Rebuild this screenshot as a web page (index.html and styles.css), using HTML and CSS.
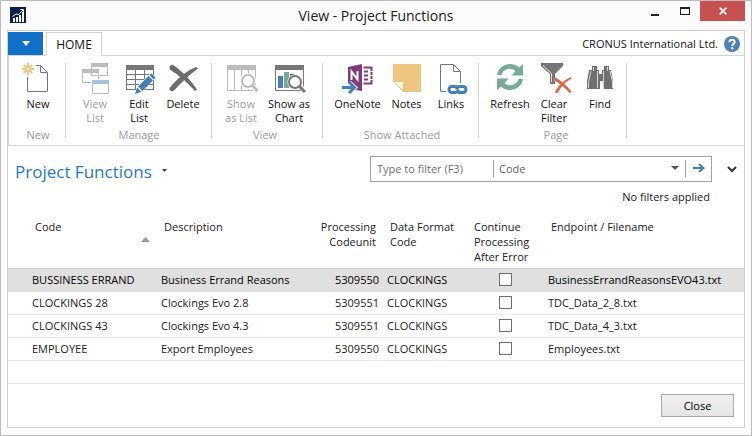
FILE: index.html
```
<!DOCTYPE html>
<html lang="en">
<head>
<meta charset="utf-8">
<title>View - Project Functions</title>
<link rel="stylesheet" href="styles.css">
</head>
<body>
<div class="window">
  <header class="titlebar">
    <svg class="logo" viewBox="0 0 16 16" width="16" height="16"><rect width="16" height="16" fill="#06204f"/><path d="M3 11h2v4H3zM6 10h2v5H6zM9 8h2v7H9zM12 5h2v10h-2z" fill="#fff"/><path d="M2.500 9.500 6 7l2.500.5L13 3M10.500 2.500h3v3" fill="none" stroke="#fff"/></svg>
    <h1 class="title">View - Project Functions</h1>
    <div class="controls">
      <button class="control" aria-label="Minimize"><svg viewBox="0 0 10 10" width="10" height="10"><path d="M1 8h8v2H1z" fill="#222"/></svg></button>
      <button class="control" aria-label="Maximize"><svg viewBox="0 0 10 10" width="10" height="10"><path d="M0 1h10v8H0zM1 3v5h8V3z" fill="#222" fill-rule="evenodd"/></svg></button>
      <button class="control control-close" aria-label="Close window"><svg viewBox="0 0 8 8" width="8" height="8"><path d="m.7.7 6.600 6.600m0-6.600L.7 7.300" stroke="#fff" stroke-width="1.800"/></svg></button>
    </div>
  </header>

  <main class="panel">
    <nav class="tabs">
      <button class="app-menu" aria-label="Application menu"><svg viewBox="0 0 8 5" width="8" height="5"><path d="M0 0h8L4 5z" fill="#fff"/></svg></button>
      <button class="tab">HOME</button>
      <span class="company">CRONUS International Ltd.</span>
      <button class="help" aria-label="Help"><svg viewBox="0 0 16 16" width="16" height="16"><circle cx="8" cy="8" r="8" fill="#4a7fb8"/><path d="M5.400 6.200C5.400 2.800 10.800 3 10.700 6c0 1.900-2.500 1.900-2.500 4" fill="none" stroke="#fff" stroke-width="2"/><circle cx="8.200" cy="12.300" r="1.200" fill="#fff"/></svg></button>
    </nav>

    <section class="ribbon">
      <div class="group group-new">
        <div class="actions">
          <button class="action"><svg class="icon" viewBox="0 0 32 32"><path d="M5.500 14v14.500h20V9.500l-7-7H14m4.500 0v7h7" fill="none" stroke="#777"/><path d="M6 0v4m0 4v4M0 6h4m4 0h4M1.800 1.800l2.700 2.700m3 3 2.700 2.700m0-8.400L7.500 4.500m-3 3-2.700 2.700" stroke="#edc377" stroke-width="1.800"/><circle cx="6" cy="6" r="2" fill="#fff" stroke="#edc377" stroke-width="1.500"/></svg><span>New</span></button>
        </div>
        <div class="group-name">New</div>
      </div>
      <div class="group group-manage">
        <div class="actions">
          <button class="action" disabled><svg class="icon" viewBox="0 0 32 32"><g fill="#fff" stroke="#bcbcbc"><path d="M12.500 .5h16v12h-16zM3.500 6.500h16v13h-16z"/></g><path d="M12 0h17v4H12zM3 6h17v4H3z" fill="#bcbcbc"/><path d="M12 16h19v15H12z" fill="#fff"/><path d="M13.500 17.500h16v13h-16z" fill="#fff" stroke="#bcbcbc"/><path d="M13 17h17v4H13z" fill="#a5c2de"/></svg><span>View<br>List</span></button>
          <button class="action"><svg class="icon" viewBox="0 0 32 32"><path d="M3.500 2.500h27v24h-27zM3 11.500h28M3 16.500h28M3 21.500h28M12.500 6v20M21.500 6v20" fill="none" stroke="#777"/><path d="M3 2h28v5H3z" fill="#777"/><path d="m12 31 1.500-7L28 10l5 4.500L18.500 29z" fill="#fff"/><path d="m12 31 2-6.500 4.500 4.200zM15 23.500 25.500 13l4.500 4.300L19.500 28zM26.300 12.200l2-1.700 4.200 4-1.800 1.900z" fill="#437fba"/></svg><span>Edit<br>List</span></button>
          <button class="action"><svg class="icon" viewBox="0 0 32 32"><path d="M6 2c8 5 17 14 24 24.500L28 28C20 19 12 12 3.500 7 1.500 5 3 1 6 2zM29 4l2 1.500C22 12 14.500 19 7.500 27c-2 2.500-6.500.5-4.500-2.500C10 16 19 8 29 4z" fill="#6c6c6c"/></svg><span>Delete</span></button>
        </div>
        <div class="group-name">Manage</div>
      </div>
      <div class="group group-view">
        <div class="actions">
          <button class="action" disabled><svg class="icon" viewBox="0 0 32 32"><path d="M2.500 2.500h28v25h-28zM9.500 6v21M16.500 6v21M23.500 6v21" fill="#fff" stroke="#bcbcbc"/><path d="M2 2h29v5H2z" fill="#bcbcbc"/><path d="m27 22 5 6" stroke="#fff" stroke-width="5"/><circle cx="23" cy="18" r="8" fill="#fff"/><circle cx="23" cy="18" r="6" fill="#fff" stroke="#bcbcbc" stroke-width="2"/><path d="m27 22 5.500 6" stroke="#bcbcbc" stroke-width="3"/></svg><span>Show<br>as List</span></button>
          <button class="action"><svg class="icon" viewBox="0 0 32 32"><path d="M2.500 2.500h28v25h-28z" fill="#fff" stroke="#777"/><path d="M2 2h29v5H2z" fill="#777"/><path d="M5 13h5v12H5z" fill="#477fb9"/><path d="M11 9h5v16h-5z" fill="#78aa98"/><path d="M17 11h4v14h-4z" fill="#777"/><path d="m27 23 5 6" stroke="#fff" stroke-width="5"/><circle cx="22" cy="19" r="7.500" fill="#fff"/><circle cx="22" cy="19" r="6" fill="#fff" stroke="#777" stroke-width="2"/><path d="m26.500 23.500 5.500 5.500" stroke="#777" stroke-width="3"/></svg><span>Show as<br>Chart</span></button>
        </div>
        <div class="group-name">View</div>
      </div>
      <div class="group group-attached">
        <div class="actions">
          <button class="action action-onenote"><svg class="icon" viewBox="0 0 32 32"><path d="M6 4 20 1v27l-6-1-3-6H6z" fill="#80397b"/><path d="M9.500 17V8.500l6 8V8" fill="none" stroke="#fff" stroke-width="2"/><path d="M21.500 4.500h8v16h-8M22 8.500h4M22 12.500h4M22 16.500h4" fill="none" stroke="#80397b" stroke-width="2"/><path d="M27 8.500h4M27 12.500h4M27 16.500h4" stroke="#fff"/><path d="M0 24.500h12M7 19.500l5.500 5L7 30" fill="none" stroke="#fff" stroke-width="5"/><path d="M0 24.500h12M7 19l5.500 5.500L7 30" fill="none" stroke="#437fba" stroke-width="3"/></svg><span>OneNote</span></button>
          <button class="action action-notes"><svg class="icon" viewBox="0 0 32 32"><path d="M2 1h28v28H13L2 18z" fill="#edc77e"/><path d="M2.500 18.500h10v10z" fill="#fff6df" stroke="#edc77e"/></svg><span>Notes</span></button>
          <button class="action action-links"><svg class="icon" viewBox="0 0 32 32"><path d="M11 28.500H5.500v-27h13l7 7V20M18.500 1.500v7h7" fill="none" stroke="#777"/><g fill="none" stroke="#437fba" stroke-width="3"><path d="M22 23.500h-5a3 3 0 0 0 0 6h3c2 0 3-1 3.500-3M23 29.500h5a3 3 0 0 0 0-6h-3c-2 0-3 1-3.500 3"/></g></svg><span>Links</span></button>
        </div>
        <div class="group-name">Show Attached</div>
      </div>
      <div class="group group-page">
        <div class="actions">
          <button class="action"><svg class="icon" viewBox="0 0 32 32"><path d="M3 12C4 5 10 1 16 1c4 0 7 1.500 9 3.500L29 1v11.500H17.500L21.500 8C16 3.500 9 6 7.500 12zM29 16c-1 7-7 11-13 11-4 0-7-1.500-9-3.500L3 27V15.500h11.500L10.500 20c5.500 4.500 12.500 2 14-4z" fill="#78aa98"/></svg><span>Refresh</span></button>
          <button class="action"><svg class="icon" viewBox="0 0 32 32"><path d="M3 0h22v3l-8 8v10h-5V11L3 3z" fill="#777"/><path d="m5 2.500 8.500 8V19" fill="none" stroke="#ddd"/><path d="M17 15c6 4 11 9 16 15M32.500 15.500C26 19 22 24 18 30" fill="none" stroke="#fff" stroke-width="5"/><path d="M17.500 14.500c6 3.500 11 8 16 14L31.500 30C27 24.500 22 20.500 16.500 17.500c-1-1.500-.5-3 1-3zM33 14l.5 1.500C27 19 23 24 20 29.500c-1 1.500-3.500.5-2.500-1.500C21 22 26 17 33 14z" fill="#dc6544"/></svg><span>Clear<br>Filter</span></button>
          <button class="action action-find"><svg class="icon" viewBox="0 0 32 32"><path d="M8 3h5v4h2v4h3V7h2V3h5v4h2l2 11v8h-9v-8h-4v8H3v-8L5 7h3z" fill="#707070"/><path d="M9.500 4v4M23.500 4v4M7 8 4.500 19v6M26 8l2.500 11v6M13.500 8v17M19.500 8v17" fill="none" stroke="#d5d5d5"/></svg><span>Find</span></button>
        </div>
        <div class="group-name">Page</div>
      </div>
    </section>

    <section class="heading">
      <h2 class="page-title">Project Functions</h2>
      <button class="page-menu" aria-label="Page menu"><svg viewBox="0 0 5 3" width="5" height="3"><path d="M0 0h5L2.500 3z" fill="#444"/></svg></button>
      <div class="filter-area">
        <form class="filter">
          <input class="filter-text" type="text" aria-label="Filter text" placeholder="Type to filter (F3)">
          <select class="filter-field" aria-label="Filter field"><option>Code</option></select>
          <svg class="filter-caret" viewBox="0 0 8 4" width="8" height="4"><path d="M0 0h8L4 4z" fill="#555"/></svg>
          <button class="filter-go" type="button" aria-label="Apply filter"><svg viewBox="0 0 12 10" width="12" height="10"><path d="M0 5h10.500M6 1l4.500 4L6 9" fill="none" stroke="#437fba" stroke-width="2"/></svg></button>
        </form>
        <p class="filter-status">No filters applied</p>
      </div>
      <button class="expand" aria-label="Expand filters"><svg viewBox="0 0 10 7" width="10" height="7"><path d="m1 1 4 4 4-4" fill="none" stroke="#333" stroke-width="2"/></svg></button>
    </section>

    <table class="list">
      <colgroup><col class="col-code"><col class="col-desc"><col class="col-unit"><col class="col-format"><col class="col-continue"><col></colgroup>
      <thead>
        <tr>
          <th class="code" aria-sort="ascending">Code<svg class="sort" viewBox="0 0 9 5" width="9" height="5"><path d="M0 5h9L4.500 0z" fill="#999"/></svg></th>
          <th>Description</th>
          <th class="number">Processing Codeunit</th>
          <th>Data Format<br>Code</th>
          <th>Continue<br>Processing<br>After Error</th>
          <th>Endpoint / Filename</th>
        </tr>
      </thead>
      <tbody>
        <tr class="selected"><td class="code">BUSSINESS ERRAND</td><td>Business Errand Reasons</td><td class="number">5309550</td><td>CLOCKINGS</td><td class="check"><input type="checkbox" aria-label="Continue after error, BUSSINESS ERRAND"></td><td>BusinessErrandReasonsEVO43.txt</td></tr>
        <tr><td class="code">CLOCKINGS 28</td><td>Clockings Evo 2.8</td><td class="number">5309551</td><td>CLOCKINGS</td><td class="check"><input type="checkbox" aria-label="Continue after error, CLOCKINGS 28"></td><td>TDC_Data_2_8.txt</td></tr>
        <tr><td class="code">CLOCKINGS 43</td><td>Clockings Evo 4.3</td><td class="number">5309551</td><td>CLOCKINGS</td><td class="check"><input type="checkbox" aria-label="Continue after error, CLOCKINGS 43"></td><td>TDC_Data_4_3.txt</td></tr>
        <tr><td class="code">EMPLOYEE</td><td>Export Employees</td><td class="number">5309550</td><td>CLOCKINGS</td><td class="check"><input type="checkbox" aria-label="Continue after error, EMPLOYEE"></td><td>Employees.txt</td></tr>
        <tr><td colspan="6"></td></tr>
      </tbody>
    </table>

    <footer class="footer"><button class="close">Close</button></footer>
  </main>
</div>
</body>
</html>
```

FILE: styles.css
```
* { box-sizing: border-box; }

body {
  margin: 0;
  font: 11px/15px "Open Sans", "Noto Sans", sans-serif;
  color: #222;
}

button, input, select {
  margin: 0;
  padding: 0;
  border: 0;
  border-radius: 0;
  background: none;
  font: inherit;
  color: inherit;
}

svg { display: block; overflow: visible; }

.window {
  display: flex;
  flex-direction: column;
  min-height: 100vh;
  padding: 0 6px 7px;
  border: 1px solid #bdbdbd;
  background: #fbfbfb;
}

.titlebar {
  display: grid;
  grid-template-columns: 1fr auto 1fr;
  align-items: start;
  height: 29px;
}

.logo { margin: 6px 0 0 3px; }

.title {
  margin: 4px 0 0;
  font-size: 14px;
  line-height: 22px;
  font-weight: 400;
}

.controls { display: flex; justify-content: flex-end; }

.control {
  display: grid;
  place-items: center;
  width: 30px;
  height: 20px;
}

.control-close { width: 45px; background: #c75050; }

.panel {
  display: flex;
  flex-direction: column;
  flex: 1;
  border: 1px solid #d0d0d0;
  background: #fff;
}

.tabs {
  display: flex;
  align-items: center;
  height: 25px;
  padding-top: 1px;
  border-bottom: 1px solid #d4d4d4;
}

.app-menu {
  display: grid;
  place-items: center;
  width: 35px;
  height: 23px;
  margin-right: 3px;
  background: #1170c7;
}

.tab {
  align-self: flex-start;
  width: 56px;
  height: 24px;
  border: 1px solid #d4d4d4;
  border-bottom-color: #fff;
  background: #fff;
  color: #111;
  font-size: 12px;
}

.company { margin-left: auto; color: #111; }

.help { margin: 0 4px 0 6px; }

.ribbon {
  display: flex;
  height: 90px;
  padding: 7px 0;
  border-left: 1px solid #d4d4d4;
  border-bottom: 1px solid #d4d4d4;
}

.group { border-right: 1px solid #d4d4d4; }

.group-new { padding: 0 5px 0 7px; }
.group-manage { padding: 0 6px 0 7px; }
.group-view { padding: 0 9px 0 5px; }
.group-attached { padding: 0 7px 0 10px; }
.group-page { padding: 0 2px 0 9px; }

.actions {
  display: flex;
  align-items: flex-start;
  height: 64px;
}

.action {
  display: flex;
  flex-direction: column;
  align-items: center;
  gap: 2px;
  width: 44px;
  color: #111;
  line-height: 14px;
  white-space: nowrap;
}

.group-view .action { width: 48px; }
.group-attached .action { width: 49px; }
.group-attached .action-links { width: 40px; }
.group-page .action-find { width: 48px; }
.action:disabled { color: #a0a0a0; }

.icon { width: 32px; height: 32px; }

.group-name {
  color: #9c9c9c;
  text-align: center;
}

.heading {
  display: flex;
  align-items: flex-start;
  padding: 10px 7px 0;
}

.page-title {
  margin: 0;
  color: #1f7acb;
  font-size: 17px;
  line-height: 32px;
  font-weight: 400;
}

.page-menu { margin: 13px 0 0 10px; }

.filter-area { width: 342px; margin-left: auto; }

.filter {
  display: flex;
  align-items: center;
  height: 26px;
  padding-bottom: 2px;
  border: 1px solid #a0a0a0;
}

.filter-text, .filter-field, .filter-go { height: 17px; }

.filter-text {
  width: 122px;
  padding-left: 6px;
  color: #666;
}

.filter-text::placeholder { color: #707070; opacity: 1; }

.filter-field {
  flex: 1;
  appearance: none;
  padding-left: 5px;
  border-left: 1px solid #a0a0a0;
  color: #666;
}

.filter-caret { margin: 0 6px 0 -8px; pointer-events: none; }

.filter-go { padding: 0 6px 0 7px; border-left: 1px solid #a0a0a0; }

.filter-status { margin: 7px 2px 0 0; text-align: right; }

.expand { margin: 10px 0 0 15px; }

.list {
  width: 100%;
  margin-top: 15px;
  border-collapse: collapse;
  table-layout: fixed;
}

.col-code { width: 149px; }
.col-desc { width: 140px; }
.col-unit { width: 86px; }
.col-format { width: 84px; }
.col-continue { width: 77px; }

th {
  height: 49px;
  padding: 0 7px;
  font-weight: 400;
  text-align: left;
  vertical-align: top;
}

td {
  height: 23px;
  padding: 0 4px;
  border-bottom: 1px solid #ececec;
  white-space: nowrap;
}

th.code { padding-left: 27px; }
td.code { padding-left: 24px; }
.number { text-align: right; }

.sort { margin: 3px 0 0 auto; }

.selected td {
  border-top: 1px solid #d4d4d4;
  border-bottom-color: #e0e0e0;
  background: #e0e0e0;
  color: #000;
}

.check input {
  display: block;
  appearance: none;
  width: 13px;
  height: 13px;
  margin: 0 auto;
  border: 1px solid #707070;
  background: #fff;
}

.footer {
  margin-top: auto;
  padding: 10px;
  text-align: right;
}

.close {
  width: 73px;
  height: 23px;
  border: 1px solid #a9a9a9;
  background: linear-gradient(#f0f0f0, #e4e4e4);
  color: #000;
}
```
